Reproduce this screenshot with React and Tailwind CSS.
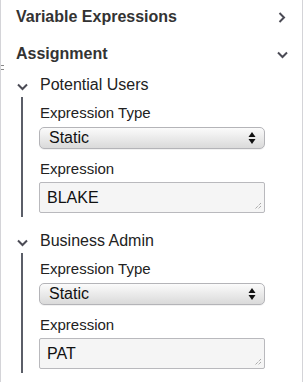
import React from "react";

function ChevronRight() {
  return (
    <svg width="8" height="11" viewBox="0 0 8 11" className="block">
      <path d="M1.5 1 L6 5.5 L1.5 10" fill="none" stroke="#4b4b55" strokeWidth="2" />
    </svg>
  );
}

function ChevronDown({ w = 11, h = 8 }) {
  return (
    <svg width={w} height={h} viewBox="0 0 11 8" className="block">
      <path d="M1 1.5 L5.5 6 L10 1.5" fill="none" stroke="#4b4b55" strokeWidth="2" />
    </svg>
  );
}

function SelectBox() {
  return (
    <div className="h-[22px] w-[226px] rounded-[5px] border border-[#b4b4b8] bg-gradient-to-b from-[#fbfbfb] to-[#dadada] flex items-center justify-between pl-[9px] pr-[8px] shadow-[0_1px_0_rgba(0,0,0,0.05)]">
      <span className="text-[16px] leading-[20px] text-[#111]">Static</span>
      <svg width="8" height="14" viewBox="0 0 8 14" className="block">
        <path d="M4 1 L7.5 6 L0.5 6 Z" fill="#111" />
        <path d="M0.5 8 L7.5 8 L4 13 Z" fill="#111" />
      </svg>
    </div>
  );
}

function TextBox({ value }) {
  return (
    <div className="relative h-[31px] w-[226px] rounded-[2px] border border-[#b9b9bd] bg-[#f5f5f5] flex items-center pl-[7px]">
      <span className="text-[16px] leading-[20px] text-[#111]">{value}</span>
      <svg width="8" height="8" viewBox="0 0 8 8" className="absolute right-[2px] bottom-[2px]">
        <path d="M7 1 L1 7 M7 4 L4 7" stroke="#8a8a8a" strokeWidth="1" strokeDasharray="1 1" />
      </svg>
    </div>
  );
}

function Group({ title, value }) {
  return (
    <div className="flex flex-col">
      <div className="h-[20px] flex items-center">
        <div className="w-[39px] flex justify-start pl-[16px] pt-[3px]">
          <ChevronDown />
        </div>
        <span className="text-[16px] leading-[20px] text-[#222]">{title}</span>
      </div>
      <div className="mt-[2px] ml-[20px] border-l-2 border-[#5b5e68] pl-[16px] pt-[6px] pb-[4px] flex flex-col">
        <div className="text-[15px] leading-[20px] text-[#222] pl-[1px]">Expression Type</div>
        <div className="mt-[4px]">
          <SelectBox />
        </div>
        <div className="mt-[10px] text-[15px] leading-[20px] text-[#222] pl-[1px]">Expression</div>
        <div className="mt-[3px]">
          <TextBox value={value} />
        </div>
      </div>
    </div>
  );
}

export default function App() {
  return (
    <div
      className="relative w-[303px] h-[382px] bg-white border-l border-r border-[#d4d4d8] overflow-hidden"
      style={{ fontFamily: '"Liberation Sans", Arial, sans-serif' }}
    >
      <div className="absolute left-0 top-[65px] w-[3px] h-[1px] bg-[#888]" />
      <div className="absolute left-0 top-[69px] w-[3px] h-[1px] bg-[#888]" />
      <div className="flex flex-col pt-[7px]">
        <div className="h-[20px] flex items-center justify-between pl-[15px] pr-[15px]">
          <span className="text-[16px] leading-[20px] font-bold text-[#333]">Variable Expressions</span>
          <div className="pr-[1px]">
            <ChevronRight />
          </div>
        </div>
        <div className="mt-[17px] h-[20px] flex items-center justify-between pl-[15px] pr-[14px]">
          <span className="text-[16px] leading-[20px] font-bold text-[#333]">Assignment</span>
          <div className="pt-[1px]">
            <ChevronDown />
          </div>
        </div>
        <div className="mt-[11px] flex flex-col gap-[14px]">
          <Group title="Potential Users" value="BLAKE" />
          <Group title="Business Admin" value="PAT" />
        </div>
      </div>
    </div>
  );
}
